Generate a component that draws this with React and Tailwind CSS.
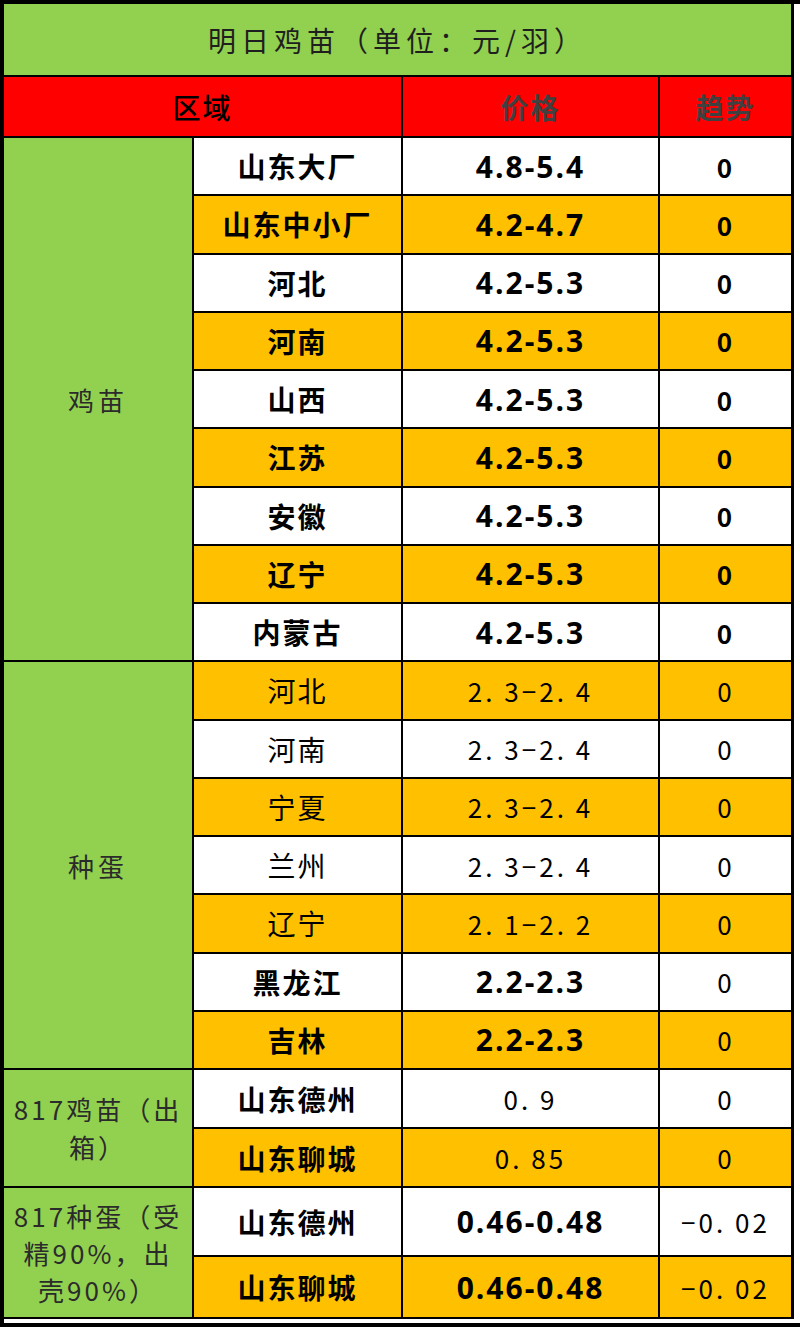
import React from 'react';

const cjk = { fontFamily: '"Noto Sans CJK SC", "Noto Sans", sans-serif' };

const group1 = [
  ['山东大厂', '4.8-5.4'],
  ['山东中小厂', '4.2-4.7'],
  ['河北', '4.2-5.3'],
  ['河南', '4.2-5.3'],
  ['山西', '4.2-5.3'],
  ['江苏', '4.2-5.3'],
  ['安徽', '4.2-5.3'],
  ['辽宁', '4.2-5.3'],
  ['内蒙古', '4.2-5.3'],
];

// bold = true for rows drawn with the heavy face
const group2 = [
  ['河北', '2. 3−2. 4', false],
  ['河南', '2. 3−2. 4', false],
  ['宁夏', '2. 3−2. 4', false],
  ['兰州', '2. 3−2. 4', false],
  ['辽宁', '2. 1−2. 2', false],
  ['黑龙江', '2.2-2.3', true],
  ['吉林', '2.2-2.3', true],
];

const Cell = ({ bg, children, className = '' }) => (
  <div className={`flex items-center justify-center ${bg} ${className}`}>{children}</div>
);

const Name = ({ bg, bold = true, children }) => (
  <Cell bg={bg}>
    <span className={`text-[28px] tracking-[2px] text-black ${bold ? 'font-bold' : 'font-normal'}`}>{children}</span>
  </Cell>
);

const BoldPrice = ({ bg, children }) => (
  <Cell bg={bg}>
    <span className="text-[30px] font-bold tracking-[2px] text-black font-['Open_Sans']">{children}</span>
  </Cell>
);

const ThinPrice = ({ bg, children }) => (
  <Cell bg={bg}>
    <span className="text-[26px] tracking-[3px] text-black">{children}</span>
  </Cell>
);

const Trend = ({ bg, bold = false, children = '0' }) => (
  <Cell bg={bg}>
    <span className={`text-[26px] tracking-[2px] text-black ${bold ? 'font-bold' : 'font-normal'}`}>{children}</span>
  </Cell>
);

const App = () => {
  const rowBg = (i) => (i % 2 === 0 ? 'bg-white' : 'bg-[#FFC000]');

  return (
    <div className="w-[800px] h-[1327px] bg-white border-l-4 border-t-4 border-b-4 border-black" style={cjk}>
      <div className="w-[790px] bg-black grid grid-cols-[188px_207px_255px_131px] grid-rows-[71px_59px_repeat(16,56.25px)_57px_57px_67px_60px] gap-[2px] pr-[3px] pb-[2px]">
        {/* title */}
        <Cell bg="bg-[#92D050]" className="col-span-4">
          <span className="text-[28px] tracking-[5px] text-[#1f1f1f]">明日鸡苗（单位：元/羽）</span>
        </Cell>

        {/* header */}
        <Cell bg="bg-[#FF0000]" className="col-span-2">
          <span className="text-[28px] font-medium tracking-[2px] text-black">区域</span>
        </Cell>
        <Cell bg="bg-[#FF0000]">
          <span className="text-[28px] font-bold tracking-[2px] text-[#404040]">价格</span>
        </Cell>
        <Cell bg="bg-[#FF0000]">
          <span className="text-[28px] font-bold tracking-[2px] text-[#404040]">趋势</span>
        </Cell>

        {/* 鸡苗 */}
        <Cell bg="bg-[#92D050]" className="row-span-9">
          <span className="text-[26px] tracking-[4px] text-[#2b2b2b]">鸡苗</span>
        </Cell>
        {group1.map(([name, price], i) => (
          <React.Fragment key={'a' + i}>
            <Name bg={rowBg(i)}>{name}</Name>
            <BoldPrice bg={rowBg(i)}>{price}</BoldPrice>
            <Trend bg={rowBg(i)} bold />
          </React.Fragment>
        ))}

        {/* 种蛋 */}
        <Cell bg="bg-[#92D050]" className="row-span-7">
          <span className="text-[26px] tracking-[4px] text-[#2b2b2b]">种蛋</span>
        </Cell>
        {group2.map(([name, price, bold], i) => (
          <React.Fragment key={'b' + i}>
            <Name bg={rowBg(i + 1)} bold={bold}>{name}</Name>
            {bold ? (
              <BoldPrice bg={rowBg(i + 1)}>{price}</BoldPrice>
            ) : (
              <ThinPrice bg={rowBg(i + 1)}>{price}</ThinPrice>
            )}
            <Trend bg={rowBg(i + 1)} />
          </React.Fragment>
        ))}

        {/* 817鸡苗 */}
        <Cell bg="bg-[#92D050]" className="row-span-2">
          <span className="text-[26px] leading-[38px] tracking-[3px] text-[#2b2b2b] text-center">
            817鸡苗（出
            <br />
            箱）
          </span>
        </Cell>
        <Name bg="bg-white">山东德州</Name>
        <ThinPrice bg="bg-white">0. 9</ThinPrice>
        <Trend bg="bg-white" />
        <Name bg="bg-[#FFC000]">山东聊城</Name>
        <ThinPrice bg="bg-[#FFC000]">0. 85</ThinPrice>
        <Trend bg="bg-[#FFC000]" />

        {/* 817种蛋 */}
        <Cell bg="bg-[#92D050]" className="row-span-2">
          <span className="text-[26px] leading-[37px] tracking-[3px] text-[#2b2b2b] text-center">
            817种蛋（受
            <br />
            精90%，出
            <br />
            壳90%）
          </span>
        </Cell>
        <Name bg="bg-white">山东德州</Name>
        <BoldPrice bg="bg-white">0.46-0.48</BoldPrice>
        <Cell bg="bg-white">
          <span className="text-[26px] tracking-[3px] text-black">−0. 02</span>
        </Cell>
        <Name bg="bg-[#FFC000]">山东聊城</Name>
        <BoldPrice bg="bg-[#FFC000]">0.46-0.48</BoldPrice>
        <Cell bg="bg-[#FFC000]">
          <span className="text-[26px] tracking-[3px] text-black">−0. 02</span>
        </Cell>
      </div>
    </div>
  );
};

export default App;
